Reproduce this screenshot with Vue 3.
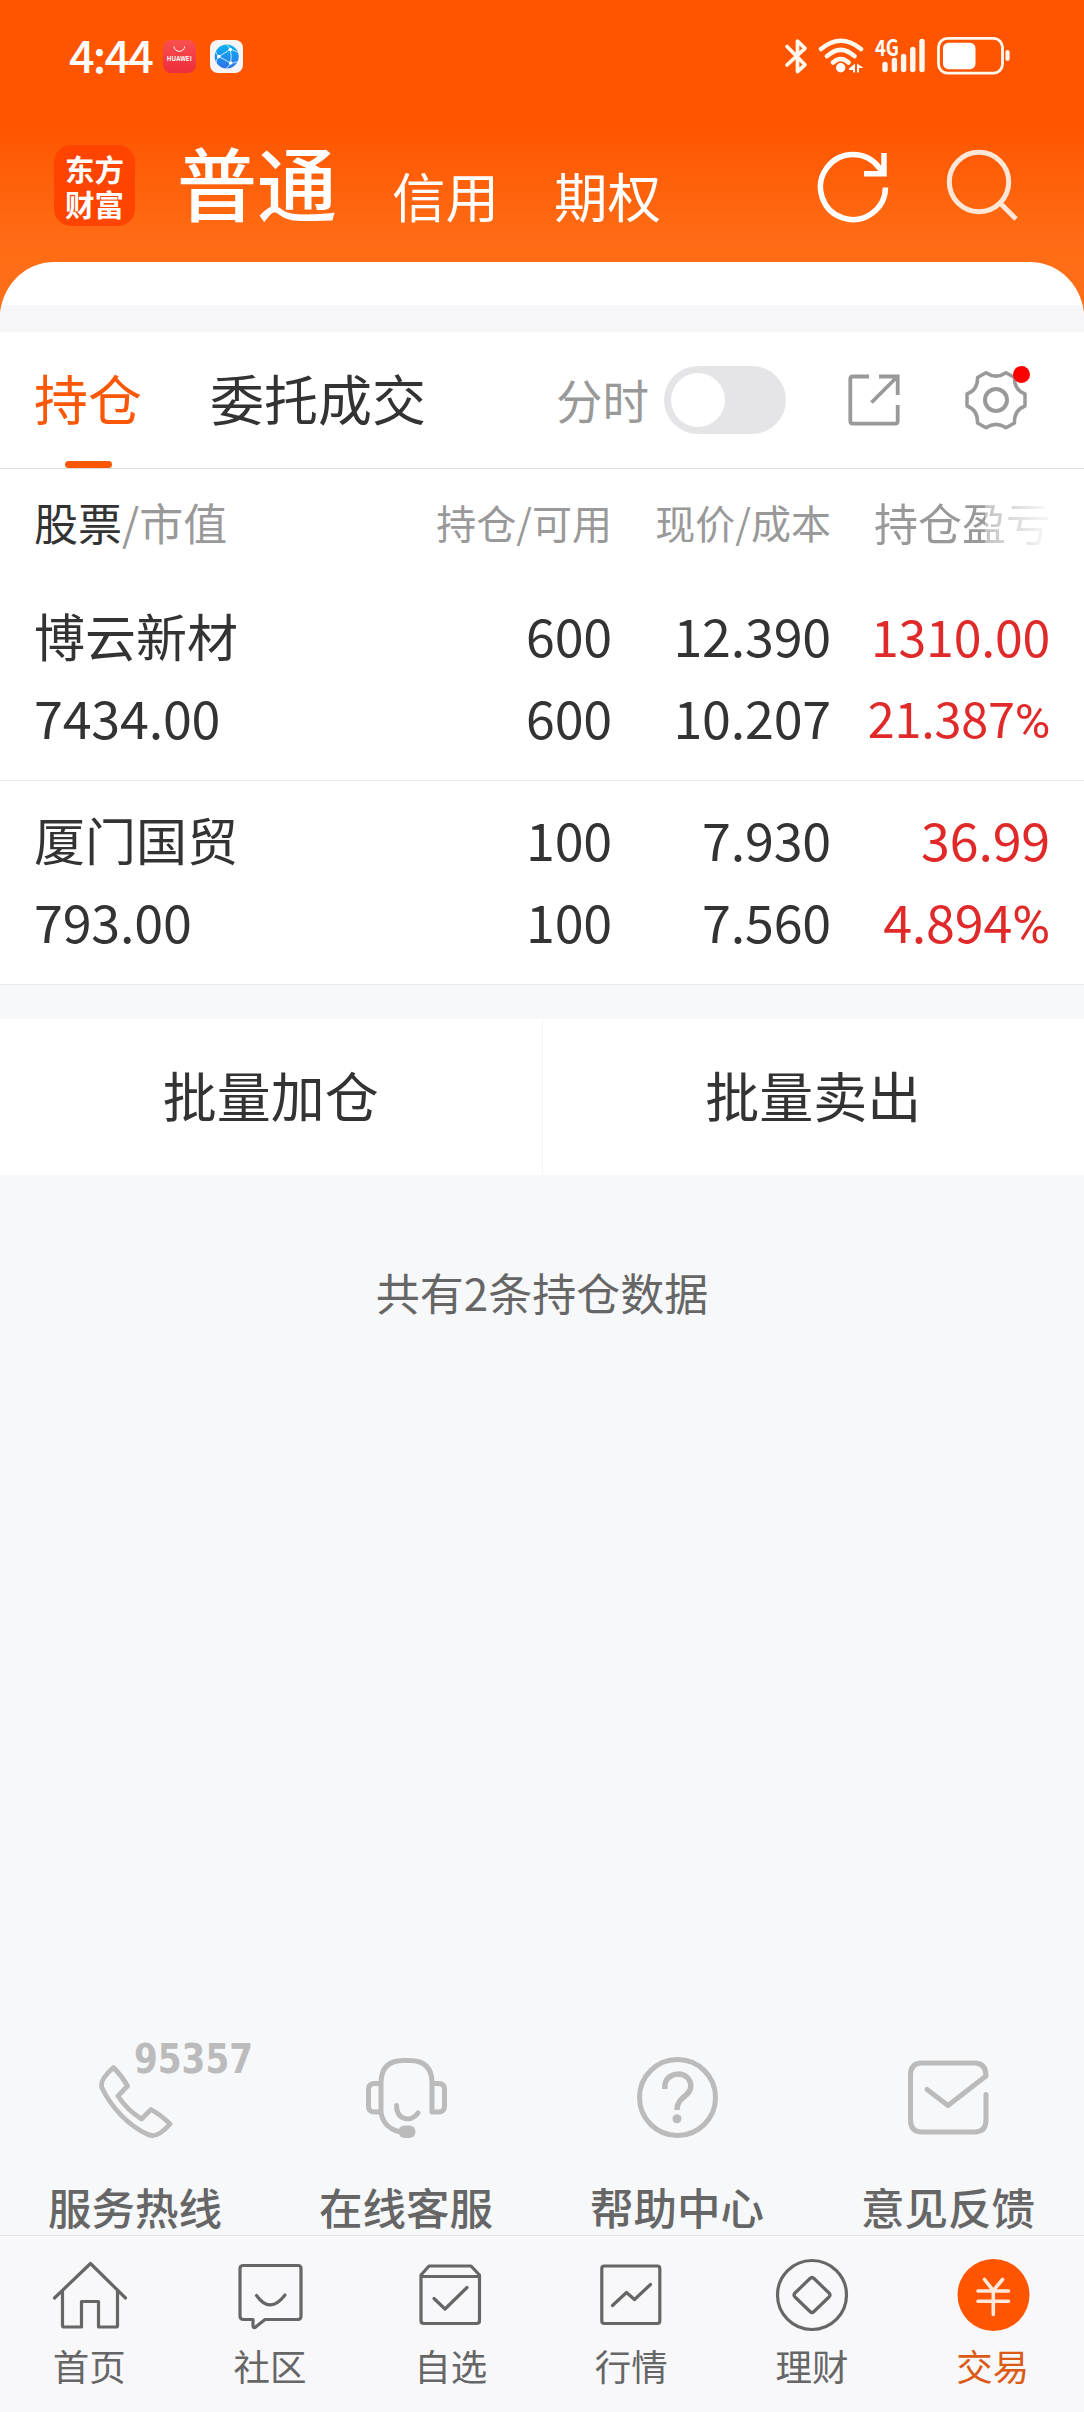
<script setup>
const holdings = [
  { name: '博云新材', value: '7434.00', total: '600', usable: '600', price: '12.390', cost: '10.207', profit: '1310.00', rate: '21.387', cls: 'compact' },
  { name: '厦门国贸', value: '793.00', total: '100', usable: '100', price: '7.930', cost: '7.560', profit: '36.99', rate: '4.894', cls: '' }
]
</script>

<template>
  <div class="page">
    <header class="top">
      <div class="status">
        <span class="time">4:44</span>
        <svg class="app-a" width="33" height="33" viewBox="0 0 33 33">
          <defs>
            <linearGradient id="red" x1="0" y1="0" x2="0" y2="1"><stop offset="0" stop-color="#f9504f" /><stop offset="1" stop-color="#ee2d3c" /></linearGradient>
          </defs>
          <rect width="33" height="33" rx="8" fill="url(#red)" />
          <path d="M11 6.5a5.3 4.8 0 0 0 10.6 0" fill="none" stroke="#fff" stroke-width="1" />
          <text x="16.3" y="21.3" text-anchor="middle" textLength="25" lengthAdjust="spacingAndGlyphs" font-size="6.2" font-weight="700" fill="#fff">HUAWEI</text>
        </svg>
        <svg class="app-b" width="33" height="33" viewBox="0 0 33 33">
          <defs>
            <linearGradient id="blue" x1="0" y1="0" x2="0" y2="1"><stop offset="0" stop-color="#08b2f2" /><stop offset="1" stop-color="#2f72ea" /></linearGradient>
          </defs>
          <rect width="33" height="33" rx="8" fill="#f5f5f7" />
          <circle cx="16.7" cy="16.6" r="12" fill="url(#blue)" />
          <g fill="none" stroke="#d9f0ff" stroke-width=".9"><path d="M8.8 16.5 20.3 9.5Q22 16 20.6 23Z" /><path d="M8.8 16.5Q5.5 13 5.6 11M8.8 16.5Q5.5 21 6 23M20.3 9.5Q19 6 16.5 5M20.3 9.5Q25 10 27.5 12.500M20.6 23Q19 27 16 28.500M20.6 23Q25 23 27.500 21.500" /></g>
          <g fill="#fff"><circle cx="8.800" cy="16.500" r="1.800" /><circle cx="20.300" cy="9.500" r="1.800" /><circle cx="20.600" cy="23" r="1.800" /></g>
        </svg>
        <svg class="signals" width="230" height="52" viewBox="783 30 230 52">
          <g fill="none" stroke="#fff8ee" stroke-linecap="round" stroke-linejoin="round">
            <path d="M787 46.500 805 64.800 797.500 71.500V41L805 48.300 787 65" stroke-width="3.700" />
            <path d="M821 49Q840.700 32.500 861 49M827 56.200Q840.700 43.500 854.500 56.200M833 62.500Q840.700 55.500 848.500 62.500" stroke-width="4.500" />
            <path d="M885 64.500V69.500M894.400 60.500V69.500M903.600 56.500V69.500M912.800 49.500V69.500M922 41.500V69.500" stroke-width="5.400" />
            <rect x="938.500" y="38.300" width="64" height="34.800" rx="9" stroke-width="2.800" />
            <path d="M1007.500 52V59" stroke-width="4.200" />
          </g>
          <g fill="#fff">
            <circle cx="840.700" cy="67.800" r="4.700" />
            <path d="M849 68.500 855 63.500V72.500H853V70H849ZM857 63.500 863.500 68H859V72.500H857Z" />
            <rect x="943" y="42.700" width="32.500" height="26.500" rx="5.500" />
            <text x="875" y="56" font-size="22" font-weight="700" textLength="24" lengthAdjust="spacingAndGlyphs">4G</text>
          </g>
        </svg>
      </div>
      <div class="nav">
        <div class="logo"><span>东方</span><span>财富</span></div>
        <span class="main">普通</span>
        <span class="sub">信用</span>
        <span class="sub second">期权</span>
        <svg class="refresh" width="76" height="76" viewBox="815 149 76 76" fill="none" stroke="#fff" stroke-width="5.500">
          <path d="M885.500 187.500A32.500 32.500 0 1 1 879 167.500L884 173.500M884 153V173.700H864" />
        </svg>
        <svg class="search" width="76" height="76" viewBox="944 146 76 76" fill="none" stroke="#ffe7d8" stroke-width="5">
          <circle cx="979" cy="182" r="29.700" /><path d="M1000 203 1016 219" />
        </svg>
      </div>
    </header>
    <div class="sheet"><div class="strip"></div></div>

    <section class="tabs">
      <div class="tab active">持仓<i></i></div>
      <div class="tab">委托成交</div>
      <span class="mini">分时</span>
      <div class="toggle"><b></b></div>
      <svg class="share" width="52" height="52" viewBox="848 374 52 52" fill="none" stroke="#999" stroke-width="3.800">
        <path d="M869 376.500H853Q850.300 376.500 850.300 379V421Q850.300 423.700 853 423.700H895Q897.700 423.700 897.700 421V405M879 376.500H897.700V395M897 377 871.500 402.500" />
      </svg>
      <svg class="gear" width="68" height="72" viewBox="964 364 68 72">
        <g fill="none" stroke="#999" stroke-width="3.500" stroke-linejoin="round">
          <path d="M986 372.800Q996 379.500 1006 372.800L1014.500 377.500Q1014 390 1025 394V406Q1014 410 1014.500 423L1006 427.700Q996 421 986 427.700L977.500 423Q978 410 967 406V394Q978 390 977.500 377.500Z" />
          <circle cx="996" cy="400" r="11" stroke-width="4" />
        </g>
        <circle cx="1021.500" cy="374.500" r="8.500" fill="#f00" />
      </svg>
    </section>

    <section class="list">
      <div class="grid head">
        <div class="first"><em>股票</em>/市值</div>
        <div>持仓/可用</div>
        <div>现价/成本</div>
        <div class="fade">持仓盈亏</div>
      </div>
      <div v-for="h in holdings" :key="h.name" class="grid row">
        <div class="left"><p class="name">{{ h.name }}</p><p>{{ h.value }}</p></div>
        <div><p>{{ h.total }}</p><p>{{ h.usable }}</p></div>
        <div><p>{{ h.price }}</p><p>{{ h.cost }}</p></div>
        <div class="red" :class="h.cls"><p class="profit">{{ h.profit }}</p><p class="rate">{{ h.rate }}<span>%</span></p></div>
      </div>
    </section>

    <section class="batch">
      <div>批量加仓</div>
      <div>批量卖出</div>
    </section>
    <p class="summary">共有2条持仓数据</p>

    <section class="services">
      <div class="service">
        <svg width="160" height="116" viewBox="95 2024 160 116">
          <path d="M113.500 2067.500Q122 2076 127.500 2086L118 2096Q127 2110 141.500 2119L151 2109.500Q161 2115 170 2124Q157 2139 148 2134.500C127 2125 111 2106 102.500 2089Q98 2081 113.500 2067.500Z" fill="none" stroke="#bbb" stroke-width="4.800" stroke-linejoin="round" />
          <text class="hotline" x="134" y="2073" font-size="41" font-weight="700" textLength="119" lengthAdjust="spacingAndGlyphs" fill="#bbb">95357</text>
        </svg>
        <span>服务热线</span>
      </div>
      <div class="service">
        <svg width="90" height="116" viewBox="362.500 2024 90 116">
          <g fill="none" stroke="#bbb" stroke-width="5" stroke-linecap="round" stroke-linejoin="round">
            <path d="M381.500 2083.500H375Q369 2083.500 369 2089.500V2106Q369 2112 375 2112H381.500M381.500 2112V2083Q381.500 2060.500 404 2060.500H410Q432.500 2060.500 432.500 2083V2112H439Q445 2112 445 2106V2089.500Q445 2083.500 439 2083.500H433M381.500 2112Q383.500 2127 399 2131.500" />
            <path d="M397 2105.500C397 2120 411 2123 418.500 2113" />
          </g>
          <rect x="399" y="2125.500" width="17" height="12.500" rx="6" fill="#bbb" />
        </svg>
        <span>在线客服</span>
      </div>
      <div class="service">
        <svg width="90" height="116" viewBox="633 2024 90 116" fill="none" stroke="#bbb" stroke-width="5">
          <circle cx="677.500" cy="2097.500" r="38" />
          <path d="M664.800 2089V2087C664.800 2070 690.800 2070 690.800 2086C690.800 2097 677 2096 677 2110" stroke-width="5.500" />
          <circle cx="677" cy="2118.700" r="4.500" fill="#bbb" stroke="none" />
        </svg>
        <span>帮助中心</span>
      </div>
      <div class="service">
        <svg width="90" height="116" viewBox="904.500 2024 90 116" fill="none" stroke="#bbb" stroke-width="5" stroke-linecap="round" stroke-linejoin="round">
          <path d="M986.500 2094.500V2120Q986.500 2132 975 2132H922.500Q911 2132 911 2120V2075Q911 2063 922.500 2063H975Q986.500 2063 986.500 2076L948.500 2105.500 927.500 2089.500" />
        </svg>
        <span>意见反馈</span>
      </div>
    </section>

    <nav class="bottom">
      <div class="item">
        <svg viewBox="50 2256 80 78"><path d="M54.500 2298 90.500 2263.500 125.500 2298M62.500 2291V2325.500Q62.500 2327 64 2327H81.500V2301.500H98.500V2327H116Q117.500 2327 117.500 2325.500V2291" /></svg>
        <span>首页</span>
      </div>
      <div class="item">
        <svg viewBox="230.500 2256 80 78"><path d="M243 2265.500H297.500Q300.500 2265.500 300.500 2268.500V2316Q300.500 2319.500 297.500 2319.500H264.500L254.500 2327.500Q252.500 2328 252.500 2325.500V2319.500H243Q239.500 2319.500 239.500 2316V2268.500Q239.500 2265.500 243 2265.500Z" /><path d="M256 2295.500Q269.500 2314.500 284.500 2295" /></svg>
        <span>社区</span>
      </div>
      <div class="item">
        <svg viewBox="411.500 2256 80 78"><path d="M428.500 2266H470.500L479 2275V2320.500Q479 2323.500 476 2323.500H423.500Q420.500 2323.500 420.500 2320.500V2275ZM420.500 2276.500H479M433.500 2298.500 444.500 2309 466.500 2287.500" /></svg>
        <span>自选</span>
      </div>
      <div class="item">
        <svg viewBox="592 2256 80 78"><rect x="601.800" y="2266" width="58" height="57.500" rx="2.500" /><path d="M612.500 2305.500 626.500 2292.500 634.500 2299.500 650.500 2284.500" /></svg>
        <span>行情</span>
      </div>
      <div class="item">
        <svg viewBox="773 2256 80 78"><circle cx="812" cy="2295" r="34.500" /><path d="M810 2278.500Q812 2276.500 814 2278.500L829 2293Q831 2295 829 2297L814 2311.500Q812 2313.500 810 2311.500L795 2297Q793 2295 795 2293Z" /></svg>
        <span>理财</span>
      </div>
      <div class="item on">
        <svg viewBox="953.500 2256 80 78"><circle cx="993" cy="2295" r="36" fill="#f50" stroke="none" /><path d="M984 2279.500 992.800 2290.500 1002 2279.500M977.500 2291H1008M977.500 2301.300H1008M992.800 2290.500V2314.500" stroke="#ffe9dc" stroke-width="3.600" /></svg>
        <span>交易</span>
      </div>
    </nav>
  </div>
</template>

<style>
body { margin: 0; background: #f7f8fa; }
</style>

<style scoped>
.page {
  width: 1084px; height: 2412px; overflow: hidden;
  display: flex; flex-direction: column;
  background: #f7f8fa; color: #333;
  font-family: "Noto Sans CJK SC", "Noto Sans", sans-serif;
}
p { margin: 0; }
svg { display: block; flex: none; }
.top {
  height: 320px; margin-bottom: -58px; flex: none;
  background: linear-gradient(#ff5500 0, #ff5500 125px, #ff6b14 235px, #ff7119 320px);
}
.status { height: 112px; display: flex; align-items: center; box-sizing: border-box; }
.time { width: 94px; margin-left: 69px; color: #fff; font-size: 45px; font-weight: 500; line-height: 60px; letter-spacing: -1.8px; margin-top: -5px; white-space: nowrap; }
.app-a { margin-top: 1px; }
.app-b { margin: 1px 540px 0 14px; }
.nav { height: 150px; display: flex; color: #fff; }
.logo {
  width: 81px; height: 81px; margin: 33px 44px 0 54px; flex: none; box-sizing: border-box; padding-top: 8px;
  display: flex; flex-direction: column; align-items: center; border-radius: 17px; background: #ff4400;
  font-family: "Liberation Sans", "Noto Sans CJK SC", sans-serif; font-size: 29.500px; font-weight: 700;
}
.logo span { height: 35px; line-height: 35px; }
.main { width: 215px; margin-left: -2px; font-size: 80px; font-weight: 500; line-height: 100px; margin-top: 18px; }
.sub { width: 162px; font-size: 53.500px; line-height: 70px; margin-top: 48px; }
.second { width: 261px; }
.refresh { margin-top: 37px; }
.search { margin: 34px 0 0 53px; }
.sheet { height: 70px; flex: none; background: #fff; border-radius: 54px 54px 0 0 / 56px 56px 0 0; padding-top: 43px; box-sizing: border-box; overflow: hidden; }
.strip { height: 27px; background: #f7f7f9; }
.tabs { height: 137px; box-sizing: border-box; flex: none; display: flex; align-items: center; background: #fff; border-bottom: 1px solid #dedede; padding-left: 34px; }
.tab { font-size: 54px; line-height: 132px; height: 136px; width: 108px; margin-right: 68px; white-space: nowrap; position: relative; }
.tab:nth-child(2) { width: 216px; margin-right: 0; }
.tab.active { color: #fa5807; }
.tab i { position: absolute; left: 31px; bottom: 0; width: 47px; height: 7px; border-radius: 3.500px; background: #fa5807; }
.mini { font-size: 46.500px; line-height: 60px; width: 108px; margin: -3px 0 0 130px; color: #999; flex: none; }
.toggle { width: 122px; height: 68px; border-radius: 34px; background: #e5e5e7; display: flex; align-items: center; flex: none; }
.toggle b { width: 54px; height: 54px; border-radius: 50%; background: #fff; margin-left: 7px; }
.share { margin-left: 62px; }
.gear { margin-left: 64px; }
.list { background: #fff; flex: none; }
.grid { display: grid; grid-template-columns: 359px 219px 219px 219px; padding: 0 34px; text-align: right; white-space: nowrap; }
.head { height: 108px; line-height: 106px; font-size: 40px; color: #999; }
.head .first { text-align: left; font-size: 44px; }
.head em { font-style: normal; color: #333; }
.head .fade { font-size: 44px; -webkit-mask-image: linear-gradient(90deg, #000 154px, rgba(0,0,0,.6) 154px, rgba(0,0,0,.12) 210px); mask-image: linear-gradient(90deg, #000 154px, rgba(0,0,0,.6) 154px, rgba(0,0,0,.12) 210px); }
.row { height: 204px; box-sizing: border-box; padding-top: 17px; border-bottom: 1px solid #ebebeb; font-size: 52px; line-height: 82px; letter-spacing: -.2px; }
.row p { height: 82px; }
.left { text-align: left; }
.left .name { font-size: 51px; letter-spacing: 0; }
.red { color: #e02a2a; }
.compact .profit { font-size: 50px; }
.compact .rate { font-size: 48.500px; }
.rate span { font-family: Roboto, sans-serif; line-height: 1; }
.batch { height: 156px; margin-top: 34px; flex: none; display: flex; background: #fff; }
.batch div { flex: 1; box-sizing: border-box; text-align: center; font-size: 54px; line-height: 152px; }
.batch div:first-child { border-right: 1px solid #f5f5f5; }
.summary { margin-top: 84px; text-align: center; font-size: 44px; line-height: 66px; color: #666; }
.services { margin-top: auto; height: 211px; flex: none; display: flex; }
.service { flex: 1; display: flex; flex-direction: column; align-items: center; font-size: 43.500px; font-weight: 500; color: #666; }
.service:first-child svg { margin-left: 79px; }
.hotline { font-family: "DejaVu Sans", sans-serif; }
.service span { line-height: 60px; margin: 37px 1px 0 0; height: 58px; }
.bottom { height: 177px; box-sizing: border-box; flex: none; display: flex; border-top: 1px solid #e0e0e3; background: #f8f8fb; padding-top: 20px; }
.item { flex: 1; display: flex; flex-direction: column; align-items: center; font-size: 36.500px; line-height: 50px; color: #666; }
.item svg { width: 80px; height: 78px; fill: none; stroke: #666; stroke-width: 3.200; stroke-linecap: round; stroke-linejoin: round; }
.item span { margin: 7px 2px 0 0; }
.on { color: #db5b16; }
</style>
